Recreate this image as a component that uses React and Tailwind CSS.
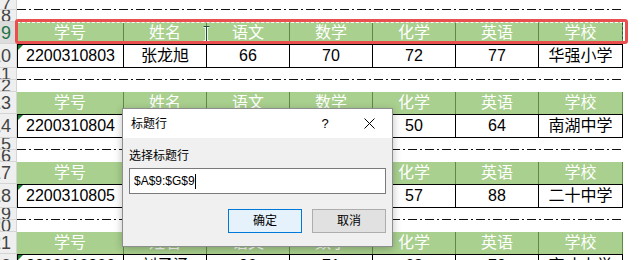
import React from 'react';

const widths = ['w-[107px]', 'w-[83px]', 'w-[83px]', 'w-[83px]', 'w-[83px]', 'w-[83px]', 'w-[84px]'];
const headers = ['学号', '姓名', '语文', '数学', '化学', '英语', '学校'];

const blocks = [
  { h: 9, d: 10, row: ['2200310803', '张龙旭', '66', '70', '72', '77', '华强小学'] },
  { h: 13, d: 14, row: ['2200310804', '李明辉', '81', '63', '50', '64', '南湖中学'] },
  { h: 17, d: 18, row: ['2200310805', '王晓芳', '75', '92', '57', '88', '二十中学'] },
  { h: 21, d: 22, row: ['2200310806', '刘子涵', '90', '71', '68', '79', '育才中学'] },
];

function RowNum({ n, h, sel }) {
  return (
    <div
      className={`w-[17px] shrink-0 overflow-hidden flex items-center justify-end pr-[5px] border-r border-b border-[#d4d4d4] ${h} ${
        sel ? 'bg-[#dcdcdc] text-[#217346]' : 'bg-[#efefef] text-[#444]'
      }`}
    >
      <span className="text-[18px] leading-none whitespace-nowrap">{n}</span>
    </div>
  );
}

function Gap({ n, h, dashed }) {
  return (
    <div className="flex">
      <RowNum n={n} h={h} />
      <div className={`w-[606px] flex flex-col justify-end ${h}`}>
        {dashed && (
          <div className="h-px w-full bg-[repeating-linear-gradient(90deg,#111_0_9px,transparent_9px_12px,#111_12px_14px,transparent_14px_17px)]" />
        )}
      </div>
    </div>
  );
}

function HeaderRow({ n }) {
  return (
    <div className="flex">
      <RowNum n={n} h="h-[22px]" sel={n === 9} />
      {headers.map((t, i) => (
        <div
          key={i}
          className={`${widths[i]} h-[22px] bg-[#a9d08e] border-r border-[#5f8a45] flex items-center justify-center text-white text-[16px] leading-none`}
        >
          {t}
        </div>
      ))}
    </div>
  );
}

function DataRow({ n, row }) {
  return (
    <div className="flex">
      <RowNum n={n} h="h-[24px]" />
      {row.map((t, i) => (
        <div
          key={i}
          className={`${widths[i]} h-[24px] relative border-y border-r border-black ${i === 0 ? 'border-l' : ''} flex items-center justify-center text-[16px] leading-none text-black bg-white`}
        >
          {i === 0 && (
            <span className="absolute left-0 top-0 w-0 h-0 border-t-[5px] border-r-[5px] border-t-[#1e7b34] border-r-transparent" />
          )}
          {t}
        </div>
      ))}
    </div>
  );
}

export default function App() {
  return (
    <div className="relative w-[643px] h-[260px] overflow-hidden bg-white font-['Liberation_Sans','Noto_Sans_CJK_SC',sans-serif]">
      <div className="flex flex-col">
        <Gap n={7} h="h-[10px]" dashed />
        <Gap n={8} h="h-[12px]" />
        {blocks.map((b) => (
          <React.Fragment key={b.h}>
            <HeaderRow n={b.h} />
            <DataRow n={b.d} row={b.row} />
            {b.h !== 21 && (
              <>
                <Gap n={b.d + 1} h="h-[12px]" dashed />
                <Gap n={b.d + 2} h="h-[12px]" />
              </>
            )}
          </React.Fragment>
        ))}
      </div>

      {/* copy marquee on row 9 */}
      <div className="absolute left-[17px] top-[22px] w-[606px] h-[22px] border border-dashed border-white border-r-[#1f5a35]" />

      {/* text cursor */}
      <svg className="absolute left-[203px] top-[26px]" width="7" height="16" viewBox="0 0 7 16">
        <path d="M0.5 0.5H6.5M3.5 0.5V15.5M0.5 15.5H6.5" stroke="#fff" strokeWidth="2.5" fill="none" />
        <path d="M0.5 0.5H6.5M3.5 0.5V15.5M0.5 15.5H6.5" stroke="#1d4a3a" strokeWidth="1" fill="none" />
      </svg>

      {/* red annotation */}
      <div className="absolute left-[15px] top-[19px] w-[613px] h-[25px] border-[3px] border-[#e94f4f] rounded-[3px]" />

      {/* dialog */}
      <div className="absolute left-[122px] top-[108px] w-[271px] h-[139px] border border-[#8e8e8e] bg-[#f0f0f0] shadow-[0_2px_8px_rgba(0,0,0,0.25)] flex flex-col font-['Liberation_Sans','Noto_Sans_CJK_SC',sans-serif] text-[12px] text-black">
        <div className="h-[29px] bg-white flex items-center pl-[8px]">
          <span>标题行</span>
          <span className="ml-auto w-[42px] flex justify-center text-[13px]">?</span>
          <span className="w-[46px] flex justify-center">
            <svg width="11" height="11" viewBox="0 0 11 11">
              <path d="M0.5 0.5L10.5 10.5M10.5 0.5L0.5 10.5" stroke="#000" strokeWidth="1" />
            </svg>
          </span>
        </div>
        <div className="flex-1 px-[6px] pt-[10px]">
          <div className="leading-[16px]">选择标题行</div>
          <div className="mt-[4px] h-[26px] w-[257px] bg-white border border-[#7a7a7a] flex items-center pl-[4px]">
            <span>$A$9:$G$9</span>
            <span className="w-px h-[15px] bg-black" />
          </div>
          <div className="mt-[15px] flex gap-[10px] pl-[99px]">
            <div className="w-[74px] h-[24px] bg-[#e5f1fb] border border-[#0078d7] flex items-center justify-center">确定</div>
            <div className="w-[74px] h-[24px] bg-[#e1e1e1] border border-[#adadad] flex items-center justify-center">取消</div>
          </div>
        </div>
      </div>
    </div>
  );
}
